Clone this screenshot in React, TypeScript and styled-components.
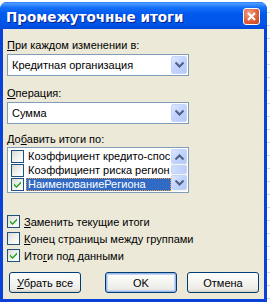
import React from "react";
import styled, { createGlobalStyle } from "styled-components";

const Global = createGlobalStyle`
  html, body { margin: 0; padding: 0; }
  body {
    width: 270px; height: 304px; overflow: hidden;
    background: #ffffff;
    font-family: "Liberation Sans", Arial, sans-serif;
  }
`;

const Page = styled.div`
  padding-top: 2px;
  width: 270px;
  height: 304px;
  box-sizing: border-box;
  background-image: repeating-linear-gradient(to bottom, transparent 0 12px, #d0d7e5 12px 13px);
`;

const Window = styled.div`
  width: 267px;
  height: 300px;
  box-sizing: border-box;
  display: flex;
  flex-direction: column;
  background: #0842d8;
  border-radius: 7px 7px 0 0;
  overflow: hidden;
`;

const TitleBar = styled.div`
  height: 27px;
  flex: none;
  display: flex;
  align-items: center;
  justify-content: space-between;
  padding: 0 6px 0 6px;
  background: linear-gradient(to bottom, #2a78f6 0%, #4a9bff 6%, #1670fa 20%, #0058ec 45%, #0055e8 80%, #0049da 100%);
`;

const Title = styled.div`
  color: #ffffff;
  font-family: "DejaVu Sans", "Liberation Sans", sans-serif;
  font-weight: bold;
  font-size: 13.5px;
  letter-spacing: 0;
  text-shadow: 1px 1px 0 #0a1f8f;
  margin-top: 2px;
`;

const CloseButton = styled.div`
  width: 17px;
  height: 17px;
  box-sizing: border-box;
  border: 1px solid #ffffff;
  border-radius: 3px;
  background: radial-gradient(circle at 35% 30%, #f0a58a 0%, #e0603c 55%, #c8401e 100%);
  display: flex;
  align-items: center;
  justify-content: center;
  margin-top: 2px;
  margin-right: 1px;
`;

const Body = styled.div`
  flex: 1;
  margin: 0 3px 3px 3px;
  background: #ece9d8;
  padding: 10px 0 0 4px;
  display: flex;
  flex-direction: column;
  font-size: 11px;
  color: #000;
`;

const Label = styled.div<{ $top?: number }>`
  height: 13px;
  line-height: 13px;
  margin-top: ${(p) => p.$top ?? 0}px;
  white-space: nowrap;
`;

const U = styled.span`
  text-decoration: underline;
  text-underline-offset: 1px;
`;

const Combo = styled.div`
  margin-top: 2px;
  width: 182px;
  height: 22px;
  box-sizing: border-box;
  border: 1px solid #7f9db9;
  background: #fff;
  display: flex;
  align-items: center;
  padding: 1px;
`;

const ComboText = styled.div`
  flex: 1;
  padding-left: 3px;
  font-size: 11px;
  line-height: 18px;
  white-space: nowrap;
  overflow: hidden;
`;

const ArrowBtn = styled.div<{ $h?: number }>`
  width: 16px;
  height: ${(p) => p.$h ?? 18}px;
  box-sizing: border-box;
  border: 1px solid #c5d4fa;
  border-radius: 2px;
  background: linear-gradient(135deg, #dfe8fe 0%, #c3d5fd 45%, #b4c8f6 100%);
  display: flex;
  align-items: center;
  justify-content: center;
  flex: none;
`;

const ListBox = styled.div`
  margin-top: 1px;
  width: 182px;
  height: 46px;
  box-sizing: border-box;
  border: 1px solid #7f9db9;
  background: #fff;
  display: flex;
  padding: 1px;
`;

const Rows = styled.div`
  flex: 1;
  overflow: hidden;
  display: flex;
  flex-direction: column;
`;

const Row = styled.div`
  height: 14px;
  display: flex;
  align-items: center;
  padding-left: 2px;
`;

const RowText = styled.div<{ $sel?: boolean }>`
  flex: 1;
  height: 13px;
  margin-left: 2px;
  padding-left: 1px;
  white-space: nowrap;
  overflow: hidden;
  box-sizing: border-box;
  color: ${(p) => (p.$sel ? "#fff" : "#000")};
  background: ${(p) => (p.$sel ? "#316ac5" : "transparent")};
  border: 1px dotted ${(p) => (p.$sel ? "#e8a040" : "transparent")};
  line-height: 11px;
`;

const ScrollBar = styled.div`
  width: 16px;
  display: flex;
  flex-direction: column;
  gap: 1px;
  background: #f3f3ef;
`;

const Thumb = styled.div`
  height: 9px;
  box-sizing: border-box;
  border: 1px solid #c5d4fa;
  border-radius: 2px;
  background: linear-gradient(to right, #cfdcfd, #bccffb);
`;

const Box = styled.div`
  width: 13px;
  height: 13px;
  box-sizing: border-box;
  border: 1px solid #1c5180;
  background: linear-gradient(135deg, #dcdcd7 0%, #f4f4f0 60%, #ffffff 100%);
  display: flex;
  align-items: center;
  justify-content: center;
  flex: none;
`;

const Options = styled.div`
  margin-top: 22px;
  display: flex;
  flex-direction: column;
  gap: 4px;
`;

const Option = styled.div`
  display: flex;
  align-items: center;
  gap: 4px;
  height: 13px;
  white-space: nowrap;
`;

const Buttons = styled.div`
  margin-top: 10px;
  display: flex;
  padding-left: 2px;
`;

const Button = styled.div<{ $def?: boolean; $gap?: number }>`
  width: 72px;
  height: 21px;
  box-sizing: border-box;
  margin-left: ${(p) => p.$gap ?? 0}px;
  border: 1px solid #003c74;
  border-radius: 3px;
  background: linear-gradient(to bottom, #ffffff 0%, #f6f6f3 40%, #ecebe6 85%, #d6d0c5 100%);
  box-shadow: ${(p) => (p.$def ? "inset 0 0 0 1px #98b8ea, inset 0 0 0 2px #c4d6f6" : "none")};
  display: flex;
  align-items: center;
  justify-content: center;
  font-size: 11px;
`;

const Check = () => (
  <svg width="9" height="9" viewBox="0 0 9 9">
    <path d="M1 3.5 L3.5 6 L8 1.5 L8 3.5 L3.5 8 L1 5.5 Z" fill="#21a121" />
  </svg>
);

const Down = () => (
  <svg width="9" height="6" viewBox="0 0 9 6">
    <path d="M0.5 0.5 L4.5 4.5 L8.5 0.5" fill="none" stroke="#4d6185" strokeWidth="2" />
  </svg>
);

const Up = () => (
  <svg width="9" height="6" viewBox="0 0 9 6">
    <path d="M0.5 5.5 L4.5 1.5 L8.5 5.5" fill="none" stroke="#4d6185" strokeWidth="2" />
  </svg>
);

export default function App() {
  return (
    <>
      <Global />
      <Page>
        <Window>
          <TitleBar>
            <Title>Промежуточные итоги</Title>
            <CloseButton>
              <svg width="9" height="9" viewBox="0 0 9 9">
                <path d="M1 1 L8 8 M8 1 L1 8" stroke="#fff" strokeWidth="2" />
              </svg>
            </CloseButton>
          </TitleBar>
          <Body>
            <Label>
              <U>П</U>ри каждом изменении в:
            </Label>
            <Combo>
              <ComboText>Кредитная организация</ComboText>
              <ArrowBtn>
                <Down />
              </ArrowBtn>
            </Combo>
            <Label $top={11}>
              <U>О</U>перация:
            </Label>
            <Combo>
              <ComboText>Сумма</ComboText>
              <ArrowBtn>
                <Down />
              </ArrowBtn>
            </Combo>
            <Label $top={9}>
              До<U>б</U>авить итоги по:
            </Label>
            <ListBox>
              <Rows>
                <Row>
                  <Box />
                  <RowText>Коэффициент кредито-способности</RowText>
                </Row>
                <Row>
                  <Box />
                  <RowText>Коэффициент риска региона</RowText>
                </Row>
                <Row>
                  <Box>
                    <Check />
                  </Box>
                  <RowText $sel>НаименованиеРегиона</RowText>
                </Row>
              </Rows>
              <ScrollBar>
                <ArrowBtn $h={15}>
                  <Up />
                </ArrowBtn>
                <Thumb />
                <ArrowBtn $h={15}>
                  <Down />
                </ArrowBtn>
              </ScrollBar>
            </ListBox>
            <Options>
              <Option>
                <Box>
                  <Check />
                </Box>
                <span>
                  <U>З</U>аменить текущие итоги
                </span>
              </Option>
              <Option>
                <Box />
                <span>
                  <U>К</U>онец страницы между группами
                </span>
              </Option>
              <Option>
                <Box>
                  <Check />
                </Box>
                <span>
                  Ито<U>г</U>и под данными
                </span>
              </Option>
            </Options>
            <Buttons>
              <Button>
                <span>
                  <U>У</U>брать все
                </span>
              </Button>
              <Button $def $gap={24}>OK</Button>
              <Button $gap={10}>Отмена</Button>
            </Buttons>
          </Body>
        </Window>
      </Page>
    </>
  );
}
